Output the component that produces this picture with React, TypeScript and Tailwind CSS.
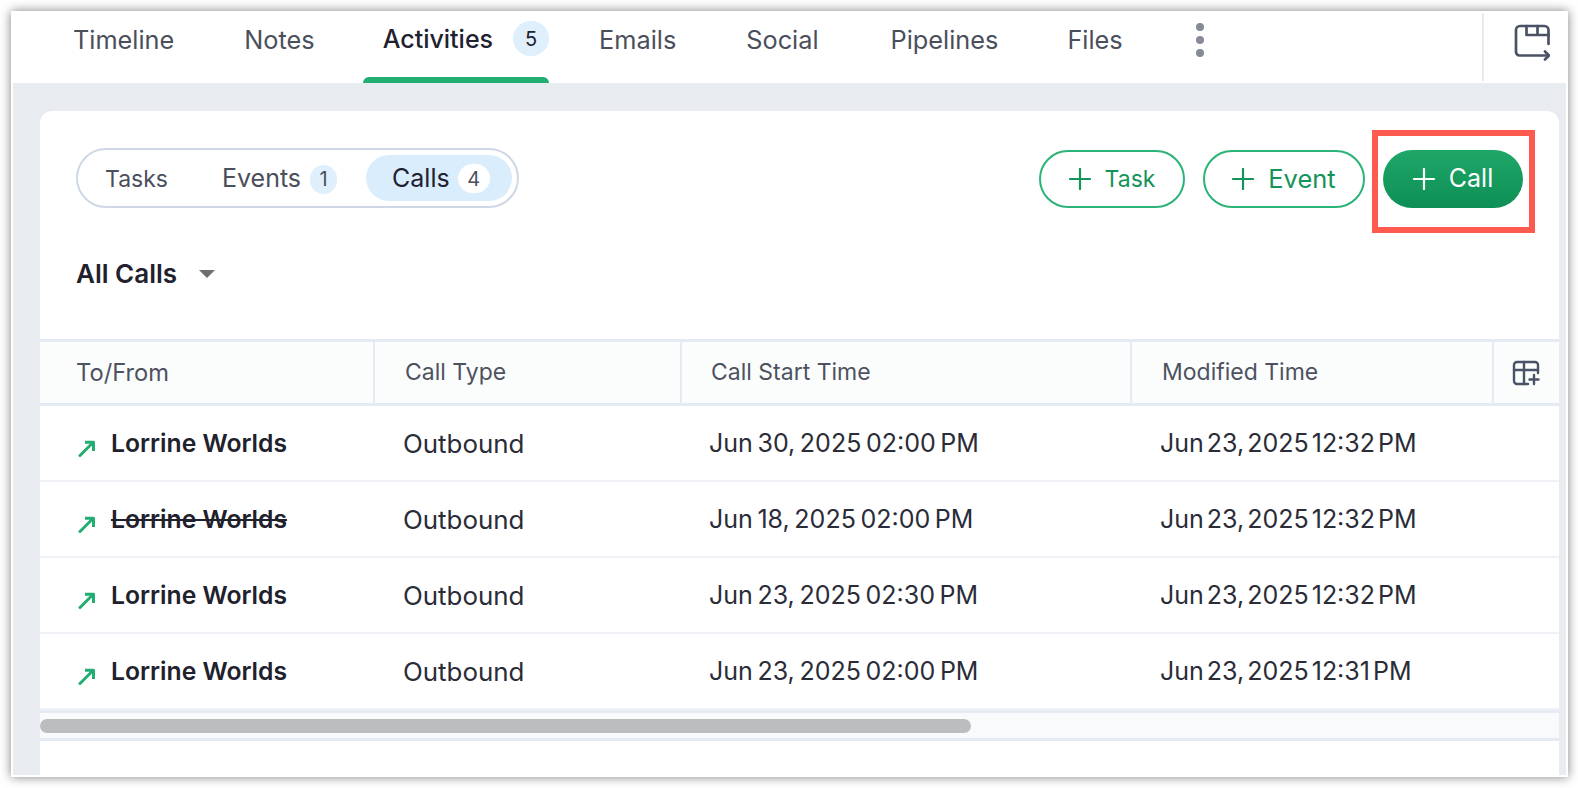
import React from "react";

const font = "font-['Inter','Liberation_Sans',sans-serif]";

const rows = [
  { start: "Jun 30, 2025 02:00 PM", modified: "Jun 23, 2025 12:32 PM", done: false },
  { start: "Jun 18, 2025 02:00 PM", modified: "Jun 23, 2025 12:32 PM", done: true },
  { start: "Jun 23, 2025 02:30 PM", modified: "Jun 23, 2025 12:32 PM", done: false },
  { start: "Jun 23, 2025 02:00 PM", modified: "Jun 23, 2025 12:31 PM", done: false },
];

const gridCols = "grid grid-cols-[335px_307px_450px_362px_64px]";

function ArrowUpRight() {
  return (
    <svg width="18" height="18" viewBox="0 0 18 18" fill="none" className="mt-[8px] shrink-0">
      <path d="M2 16.500 14.500 4" stroke="#22ad72" strokeWidth="3" strokeLinecap="round" />
      <path d="M7 3.300h8.500v8.700" stroke="#22ad72" strokeWidth="3" strokeLinejoin="round" fill="none" />
    </svg>
  );
}

function PlusIcon() {
  return (
    <svg width="22" height="22" viewBox="0 0 22 22" fill="none" stroke="currentColor" strokeWidth="2.200" strokeLinecap="round" className="shrink-0">
      <path d="M11 1v20M1 11h20" />
    </svg>
  );
}

function ExportIcon() {
  return (
    <svg width="36" height="38" viewBox="0 0 36 38" fill="none" stroke="#4a5266" strokeWidth="2.700" strokeLinecap="round" strokeLinejoin="round">
      <path d="M34.500 20V6a4 4 0 0 0-4-4H6a4 4 0 0 0-4 4v22a3.500 3.500 0 0 0 3.500 3.500H34" />
      <path d="M12.500 2v9h22M23.500 2v9" />
      <path d="M31 27.500l4 4-4 4" />
    </svg>
  );
}

function AddColumnIcon() {
  return (
    <svg width="28" height="26" viewBox="0 0 28 26" fill="none" stroke="#4a5266" strokeWidth="2.400" strokeLinecap="round" strokeLinejoin="round">
      <path d="M26 13V5a3 3 0 0 0-3-3H5a3 3 0 0 0-3 3v16a3 3 0 0 0 3 3h11" />
      <path d="M2 10h24M12 2v22" />
      <path d="M22 15v9M17.500 19.500h9" />
    </svg>
  );
}

function Badge({ children, className }: { children: React.ReactNode; className: string }) {
  return <span className={`flex items-center justify-center rounded-full ${className}`}>{children}</span>;
}

function TopTabs() {
  return (
    <div className="flex h-[72px] shrink-0 items-stretch bg-white">
      <div className="flex flex-1 items-stretch pl-[27px] text-[25.300px] text-[#4b4f5c]">
        <span className="px-[35px] pt-[10px]">Timeline</span>
        <span className="pl-[35px] pr-[33px] pt-[10px]">Notes</span>
        <div className="relative mx-[15px] flex items-start gap-[20px] pl-[20px] pt-[10px] text-[25px] font-[450] text-[#1f2230]">
          <span>Activities</span>
          <Badge className="h-[35px] w-[36px] bg-[#dfeffc] text-[20px] font-normal">5</Badge>
          <div className="absolute bottom-0 left-0 right-0 h-[6px] rounded-t-[6px] bg-[#22ad72]" />
        </div>
        <span className="px-[35px] pt-[10px]">Emails</span>
        <span className="pl-[35px] pr-[37px] pt-[10px]">Social</span>
        <span className="pl-[35px] pr-[34px] pt-[10px]">Pipelines</span>
        <span className="px-[35px] pt-[10px]">Files</span>
        <div className="ml-[38px] flex flex-col gap-[5px] pt-[12px]">
          <span className="h-[8px] w-[8px] rounded-full bg-[#858a99]" />
          <span className="h-[8px] w-[8px] rounded-full bg-[#858a99]" />
          <span className="h-[8px] w-[8px] rounded-full bg-[#858a99]" />
        </div>
      </div>
      <div className="my-[2px] w-[86px] border-l-2 border-[#e6ebf1] pl-[30px] pt-[11px]">
        <ExportIcon />
      </div>
    </div>
  );
}

function SubTabs() {
  return (
    <div className="flex h-[60px] w-[443px] items-center rounded-full border-2 border-[#ced8e4] pl-[27px] pr-[5px] text-[25px] text-[#4b4f5c]">
      <span className="mt-[2px] text-[23px]">Tasks</span>
      <span className="ml-[54px] mt-[2px]">Events</span>
      <Badge className="ml-[9px] mt-[2px] h-[29px] w-[27px] bg-[#dfeffc] text-[20px]">1</Badge>
      <div className="ml-[29px] flex h-[46px] flex-1 items-center rounded-full bg-[#d9edfd] pl-[26px] text-[#1f2230]">
        <span className="mt-[1px]">Calls</span>
        <Badge className="ml-[8px] mt-[1px] h-[29px] w-[32px] bg-white text-[20px] text-[#4b4f5c]">4</Badge>
      </div>
    </div>
  );
}

function ActionButton({ label, className, solid }: { label: string; className: string; solid?: boolean }) {
  return (
    <button
      className={`flex h-[58px] items-center justify-center gap-[14px] rounded-full ${className} ${
        solid
          ? "bg-gradient-to-b from-[#1ea768] to-[#0d8f55] text-white"
          : "border-2 border-[#2bb378] bg-white text-[#14935a]"
      }`}
    >
      <PlusIcon />
      {label}
    </button>
  );
}

function CallsTable() {
  return (
    <div className="text-[25px]">
      <div className={`${gridCols} h-[67px] border-y-[3px] border-[#e4ebf2] bg-[#fbfdfd] text-[23px] text-[#4e5260]`}>
        <div className="flex items-center border-r-2 border-[#e4ebf2] pl-[36px] text-[23.700px]">To/From</div>
        <div className="flex items-center border-r-2 border-[#e4ebf2] pl-[30px]">Call Type</div>
        <div className="flex items-center border-r-2 border-[#e4ebf2] pl-[29px]">Call Start Time</div>
        <div className="flex items-center border-r-2 border-[#e4ebf2] pl-[30px]">Modified Time</div>
        <div className="flex items-center pl-[18px]">
          <AddColumnIcon />
        </div>
      </div>
      {rows.map((row) => (
        <div key={row.start} className={`${gridCols} h-[76px] items-center border-b-2 border-[#eef2f6] pt-[2px] text-[#2a2c38]`}>
          <div className="flex items-center gap-[15px] pl-[38px]">
            <ArrowUpRight />
            <span className={`text-[24.700px] font-semibold text-[#20212d] ${row.done ? "line-through" : ""}`}>Lorrine Worlds</span>
          </div>
          <div className="pl-[28px] text-[25.900px]">Outbound</div>
          <div className="pl-[27px] [word-spacing:-2.400px]">{row.start}</div>
          <div className="pl-[28px] [word-spacing:-4px]">{row.modified}</div>
          <div />
        </div>
      ))}
      <div className="flex h-[31px] items-center border-y-[3px] border-[#e4ebf2] bg-[#f9fafc]">
        <div className="h-[14px] w-[931px] rounded-full bg-[#bcbdbf]" />
      </div>
    </div>
  );
}

export default function App() {
  return (
    <div className={`h-[788px] w-[1578px] overflow-hidden bg-white pb-[11px] pl-[11px] pr-[10px] pt-[11px] ${font}`}>
      <div className="flex h-full flex-col bg-white shadow-[0_0_10px_rgba(0,0,0,0.5)]">
        <TopTabs />
        <div className="mx-[2px] mb-[2px] flex min-h-0 flex-1 flex-col bg-[#e8ecf1] pt-[28px]">
          <div className="relative ml-[27px] mr-[7px] flex-1 overflow-hidden rounded-t-[12px] bg-white">
            <div className="flex items-start justify-between pl-[36px] pr-[36px] pt-[37px]">
              <SubTabs />
              <div className="mt-[2px] flex gap-[18px]">
                <ActionButton label="Task" className="w-[146px] text-[23px]" />
                <ActionButton label="Event" className="w-[162px] text-[25.500px]" />
                <ActionButton label="Call" className="w-[140px] text-[25px]" solid />
              </div>
            </div>
            <div className="mt-[47px] flex h-[37px] items-center gap-[22px] pl-[36px]">
              <span className="text-[26px] font-semibold text-[#20212d]">All Calls</span>
              <span className="h-0 w-0 border-x-[8px] border-t-[8px] border-x-transparent border-t-[#6f6f6f]" />
            </div>
            <div className="mt-[47px]">
              <CallsTable />
            </div>
            <div className="absolute left-[1332px] top-[19px] h-[103px] w-[163px] border-[6px] border-[#ff5a4f]" />
          </div>
        </div>
      </div>
    </div>
  );
}
